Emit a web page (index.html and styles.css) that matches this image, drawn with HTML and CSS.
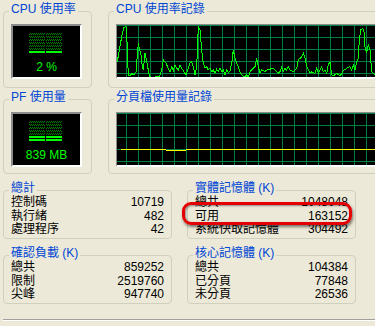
FILE: index.html
```html
<!DOCTYPE html>
<html>
<head>
<meta charset="utf-8">
<link rel="stylesheet" href="styles.css">
</head>
<body>
<div class="page">
  <div class="top">
    <section class="group">
      <div class="legend">CPU 使用率</div>
      <div class="meter">
        <div class="bars">
          <div class="col"><div class="unlit"></div><div class="lit n1"></div></div>
          <div class="col"><div class="unlit"></div><div class="lit n1"></div></div>
        </div>
        <div class="mtext">2 %</div>
      </div>
    </section>
    <section class="group">
      <div class="legend">CPU 使用率記錄</div>
      <div class="graph">
        <svg width="259" height="52" viewBox="117 25 259 52">
          <defs>
            <pattern id="gridA" x="126" y="37" width="12" height="12" patternUnits="userSpaceOnUse">
              <rect width="1" height="12" fill="#008040"/>
              <rect width="12" height="1" fill="#008040"/>
            </pattern>
          </defs>
          <rect x="117" y="25" width="259" height="52" fill="url(#gridA)" shape-rendering="crispEdges"/>
          <polyline fill="none" stroke="#00ff00" stroke-width="1" shape-rendering="crispEdges" points="117.3,61.7 119.3,50 121.7,36.7 124,27.3 126,26.7 126.7,33.3 128.3,75 130,76 131.7,73.3 134,75 136,71.7 138.3,43.3 139.3,48.3 141,55 142.3,66.7 143.3,70 145,53.3 146.7,61.7 148.3,70 149.3,76 151.7,77.3 159.3,76.7 161.7,70 163.3,60 166,63.3 168.3,68.3 170,71.7 171.7,66.7 173.3,70.7 175,65 176.7,68.3 178.3,70 180,65 181.7,68.3 184,71.7 186,75 188.3,68.3 190,63.3 191.7,61.7 193.3,66.7 195,75 196.7,66.7 198.3,26.7 200,30 201.7,50 203.3,63.3 205,68.3 206.7,66.7 208.3,70 210,68.3 211.7,71.7 213.3,70 215,73.3 216.7,69.3 218.3,71.7 220,68.3 221.7,71.7 223.3,70 225,75 226.7,70 228.3,72.7 230,70.7 231.7,63.3 233.3,50 235,58.3 236.7,63.3 238.3,66.7 240,71.7 241.7,75 243.3,76 245,76.7 246.7,75 248.3,76.7 250,71.7 251.7,70 253.3,68.3 255,66.7 256.7,58.3 258.3,66.7 260,73.3 261.7,70 265,71.7 266.7,70 273.3,68.3 276.7,71.7 278.3,73.3 280,71.7 281.7,66.7 283.3,71.7 285,68.3 286.7,70 288.3,66.7 290,70 293.3,71.7 296.7,68.3 298.3,60 301.7,56.7 303.3,53.3 305,58.3 306.7,66.7 310,73.3 311.7,71.7 315,73.3 316.7,68.3 318.3,73.3 320,70 321.7,66.7 323.3,71.7 325,70 326.7,73.3 328.3,65 330,61.7 331.7,75 333.3,76 336.7,73.3 340,76 343.3,70.7 346.7,68.3 350,66.7 351.7,70 353.3,65 355,70 356.7,61.7 358.3,58.3 359.3,40 360.7,30 362.7,28.3 364,31.7 365,46.7 366.7,53 368.3,45 370,50 371.7,71.7 375,75 376,76"/>
        </svg>
      </div>
    </section>
    <section class="group">
      <div class="legend">PF 使用量</div>
      <div class="meter">
        <div class="bars">
          <div class="col"><div class="unlit"></div><div class="lit n2"></div></div>
          <div class="col"><div class="unlit"></div><div class="lit n2"></div></div>
        </div>
        <div class="mtext">839 MB</div>
      </div>
    </section>
    <section class="group">
      <div class="legend">分頁檔使用量記錄</div>
      <div class="graph">
        <svg width="259" height="52" viewBox="117 113 259 52">
          <defs>
            <pattern id="gridB" x="126" y="125" width="12" height="12" patternUnits="userSpaceOnUse">
              <rect width="1" height="12" fill="#008040"/>
              <rect width="12" height="1" fill="#008040"/>
            </pattern>
          </defs>
          <rect x="117" y="113" width="259" height="52" fill="url(#gridB)" shape-rendering="crispEdges"/>
          <g fill="#ffff00" shape-rendering="crispEdges">
            <rect x="121" y="149" width="45" height="1"/>
            <rect x="166" y="150" width="20" height="1"/>
            <rect x="186" y="149" width="190" height="1"/>
          </g>
        </svg>
      </div>
    </section>
  </div>

  <div class="bottom">
    <section class="group">
      <div class="legend">總計</div>
      <div class="rows">
        <div class="row"><span>控制碼</span><span>10719</span></div>
        <div class="row"><span>執行緒</span><span>482</span></div>
        <div class="row"><span>處理程序</span><span>42</span></div>
      </div>
    </section>
    <section class="group">
      <div class="legend">實體記憶體 (K)</div>
      <div class="rows">
        <div class="row"><span>總共</span><span>1048048</span></div>
        <div class="row"><span>可用</span><span>163152</span></div>
        <div class="row"><span>系統快取記憶體</span><span>304492</span></div>
      </div>
      <div class="highlight"></div>
    </section>
    <section class="group">
      <div class="legend">確認負載 (K)</div>
      <div class="rows">
        <div class="row"><span>總共</span><span>859252</span></div>
        <div class="row"><span>限制</span><span>2519760</span></div>
        <div class="row"><span>尖峰</span><span>947740</span></div>
      </div>
    </section>
    <section class="group">
      <div class="legend">核心記憶體 (K)</div>
      <div class="rows">
        <div class="row"><span>總共</span><span>104384</span></div>
        <div class="row"><span>已分頁</span><span>77848</span></div>
        <div class="row"><span>未分頁</span><span>26536</span></div>
      </div>
    </section>
  </div>

  <div class="status"></div>
</div>
</body>
</html>
```

FILE: styles.css
```css
html, body {
  margin: 0;
  padding: 0;
}

body {
  background: #ece9d8;
  font-family: "Liberation Sans Narrow", "Liberation Sans", "Noto Sans CJK TC", sans-serif;
  font-size: 12px;
  color: #000;
}

.page {
  width: 375px;
  height: 326px;
  overflow: hidden;
  box-sizing: border-box;
  padding: 11px 0 0 3px;
}

.top {
  display: grid;
  grid-template-columns: 89px 290px;
  grid-template-rows: 77px 75px;
  column-gap: 16px;
  row-gap: 11px;
}

.group {
  position: relative;
  box-sizing: border-box;
  border: 1px solid #d0d0bf;
  border-radius: 4px;
  padding: 0 7px;
}

.legend {
  width: max-content;
  margin: -9px 0 0 -2px;
  padding: 0 2px;
  line-height: 13px;
  background: #ece9d8;
  color: #0046d5;
}

.meter {
  margin-top: 8px;
  width: 71px;
  height: 55px;
  box-sizing: border-box;
  background: #000;
  border: 2px solid;
  border-color: #8c8c8c #fff #fff #8c8c8c;
  padding-top: 7px;
  display: flex;
  flex-direction: column;
  align-items: center;
}

.bars {
  display: flex;
  gap: 1px;
  margin-right: 2px;
}

.col {
  width: 16px;
  height: 21px;
  display: flex;
  flex-direction: column;
}

.unlit {
  flex: 1;
  background-image:
    linear-gradient(to bottom, transparent 2px, #000 2px),
    repeating-conic-gradient(#008400 0 25%, #000 0 50%);
  background-size: 100% 3px, 2px 2px;
}

.lit {
  background-image: linear-gradient(to bottom, #00ff00 2px, transparent 2px);
  background-size: 100% 3px;
}

.lit.n1 { height: 3px; }
.lit.n2 { height: 6px; }

.mtext {
  margin-top: 7px;
  line-height: 12px;
  color: #00ff00;
  white-space: nowrap;
}

.graph {
  margin-top: 8px;
  height: 55px;
  width: 275px;
  box-sizing: border-box;
  background: #000;
  border-style: solid;
  border-width: 1px 0 2px 1px;
  border-color: #8c8c8c #fff #fff #8c8c8c;
}

.graph svg {
  display: block;
}

.bottom {
  display: grid;
  grid-template-columns: 169px 169px;
  grid-auto-rows: 49px;
  column-gap: 15px;
  row-gap: 16px;
  margin-top: 16px;
}

.rows {
  margin-top: 1px;
}

.row {
  display: flex;
  justify-content: space-between;
  line-height: 13.5px;
  white-space: nowrap;
}

.highlight {
  position: absolute;
  left: -6px;
  top: 11px;
  width: 170px;
  height: 23px;
  box-sizing: border-box;
  border: 3px solid #e40000;
  border-radius: 9px;
  box-shadow: 1px 2px 3px rgba(0, 0, 0, 0.5), inset 1px 1px 2px rgba(0, 0, 0, 0.4);
}

.status {
  margin-top: 15px;
  height: 10px;
  border-top: 1px solid #a0a0a0;
  box-shadow: inset 0 1px #fff;
}
```
